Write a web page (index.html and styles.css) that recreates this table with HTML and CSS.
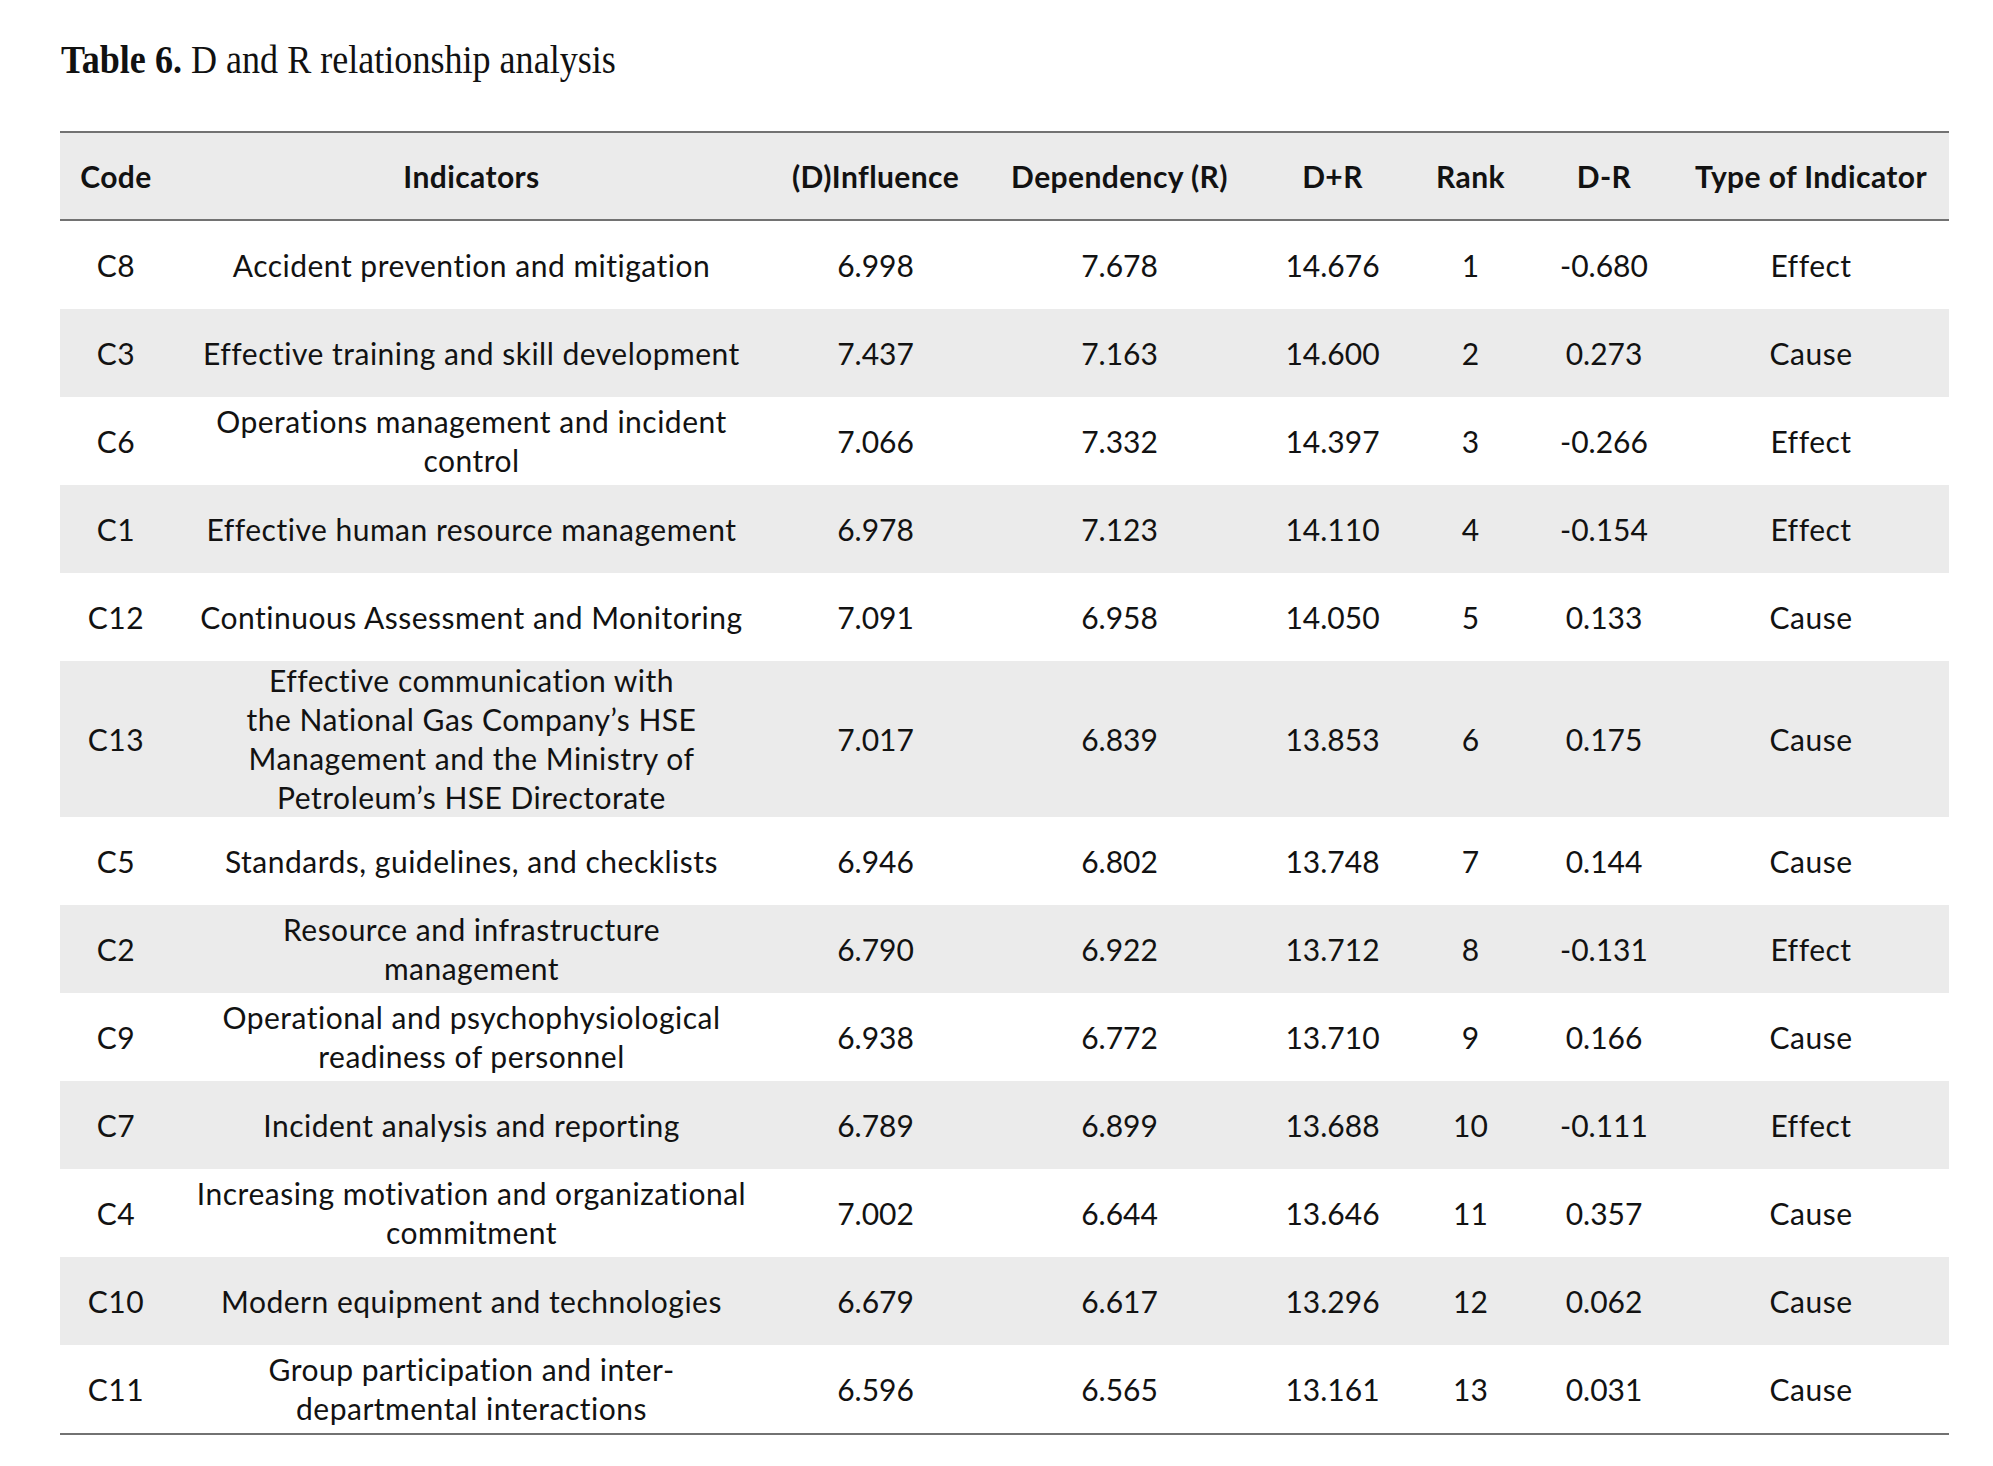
FILE: index.html
```html
<!DOCTYPE html>
<html lang="en">
<head>
<meta charset="utf-8">
<title>Table 6. D and R relationship analysis</title>
<link rel="stylesheet" href="styles.css">
</head>
<body>
<div class="page">
  <p class="caption"><b>Table 6.</b> D and R relationship analysis</p>
  <table class="data">
    <colgroup>
      <col class="c-code"><col class="c-ind"><col class="c-inf"><col class="c-dep"><col class="c-dr"><col class="c-rank"><col class="c-dmr"><col class="c-type">
    </colgroup>
    <thead>
      <tr><th>Code</th><th>Indicators</th><th>(D)Influence</th><th>Dependency (R)</th><th>D+R</th><th>Rank</th><th>D-R</th><th>Type of Indicator</th></tr>
    </thead>
    <tbody>
      <tr><td class="txt">C8</td><td class="txt">Accident prevention and mitigation</td><td>6.998</td><td>7.678</td><td>14.676</td><td>1</td><td>-0.680</td><td class="txt">Effect</td></tr>
      <tr><td class="txt">C3</td><td class="txt">Effective training and skill development</td><td>7.437</td><td>7.163</td><td>14.600</td><td>2</td><td>0.273</td><td class="txt">Cause</td></tr>
      <tr><td class="txt">C6</td><td class="txt">Operations management and incident<br>control</td><td>7.066</td><td>7.332</td><td>14.397</td><td>3</td><td>-0.266</td><td class="txt">Effect</td></tr>
      <tr><td class="txt">C1</td><td class="txt">Effective human resource management</td><td>6.978</td><td>7.123</td><td>14.110</td><td>4</td><td>-0.154</td><td class="txt">Effect</td></tr>
      <tr><td class="txt">C12</td><td class="txt">Continuous Assessment and Monitoring</td><td>7.091</td><td>6.958</td><td>14.050</td><td>5</td><td>0.133</td><td class="txt">Cause</td></tr>
      <tr><td class="txt">C13</td><td class="txt">Effective communication with<br>the National Gas Company’s HSE<br>Management and the Ministry of<br>Petroleum’s HSE Directorate</td><td>7.017</td><td>6.839</td><td>13.853</td><td>6</td><td>0.175</td><td class="txt">Cause</td></tr>
      <tr><td class="txt">C5</td><td class="txt">Standards, guidelines, and checklists</td><td>6.946</td><td>6.802</td><td>13.748</td><td>7</td><td>0.144</td><td class="txt">Cause</td></tr>
      <tr><td class="txt">C2</td><td class="txt">Resource and infrastructure<br>management</td><td>6.790</td><td>6.922</td><td>13.712</td><td>8</td><td>-0.131</td><td class="txt">Effect</td></tr>
      <tr><td class="txt">C9</td><td class="txt">Operational and psychophysiological<br>readiness of personnel</td><td>6.938</td><td>6.772</td><td>13.710</td><td>9</td><td>0.166</td><td class="txt">Cause</td></tr>
      <tr><td class="txt">C7</td><td class="txt">Incident analysis and reporting</td><td>6.789</td><td>6.899</td><td>13.688</td><td>10</td><td>-0.111</td><td class="txt">Effect</td></tr>
      <tr><td class="txt">C4</td><td class="txt">Increasing motivation and organizational<br>commitment</td><td>7.002</td><td>6.644</td><td>13.646</td><td>11</td><td>0.357</td><td class="txt">Cause</td></tr>
      <tr><td class="txt">C10</td><td class="txt">Modern equipment and technologies</td><td>6.679</td><td>6.617</td><td>13.296</td><td>12</td><td>0.062</td><td class="txt">Cause</td></tr>
      <tr><td class="txt">C11</td><td class="txt">Group participation and inter-<br>departmental interactions</td><td>6.596</td><td>6.565</td><td>13.161</td><td>13</td><td>0.031</td><td class="txt">Cause</td></tr>
    </tbody>
  </table>
</div>
</body>
</html>
```
FILE: styles.css
```css
html, body {
  margin: 0;
  padding: 0;
  background: #ffffff;
}

.page {
  padding: 35px 0 0 60px;
}

.caption {
  margin: 0 0 0 1px;
  font-family: "Liberation Serif", "Times New Roman", serif;
  font-size: 39px;
  line-height: 50px;
  color: #111111;
  transform: scaleX(0.925);
  transform-origin: left center;
  white-space: nowrap;
}

.caption b {
  font-weight: 700;
}

.data {
  margin-top: 46px;
  width: 1889px;
  border-collapse: collapse;
  table-layout: fixed;
  font-family: Lato, "Noto Sans", sans-serif;
  font-size: 30px;
  color: #121212;
}

.c-code { width: 112px; }
.c-ind { width: 599px; }
.c-inf { width: 209px; }
.c-dep { width: 279px; }
.c-dr { width: 147px; }
.c-rank { width: 129px; }
.c-dmr { width: 138px; }
.c-type { width: 276px; }

.data thead tr {
  background: #ebebeb;
  border-top: 2px solid #727272;
  border-bottom: 2px solid #727272;
}

.data th {
  height: 86px;
  padding: 0;
  font-weight: 700;
  letter-spacing: 0.4px;
  text-align: center;
  vertical-align: middle;
  white-space: nowrap;
}

.data td {
  height: 88px;
  padding: 0;
  text-align: center;
  vertical-align: middle;
  line-height: 39px;
  white-space: nowrap;
}

.data td.txt {
  letter-spacing: 0.5px;
}

.data tbody tr:nth-child(even) {
  background: #ebebeb;
}

.data tbody tr:last-child {
  border-bottom: 2px solid #727272;
}
```
